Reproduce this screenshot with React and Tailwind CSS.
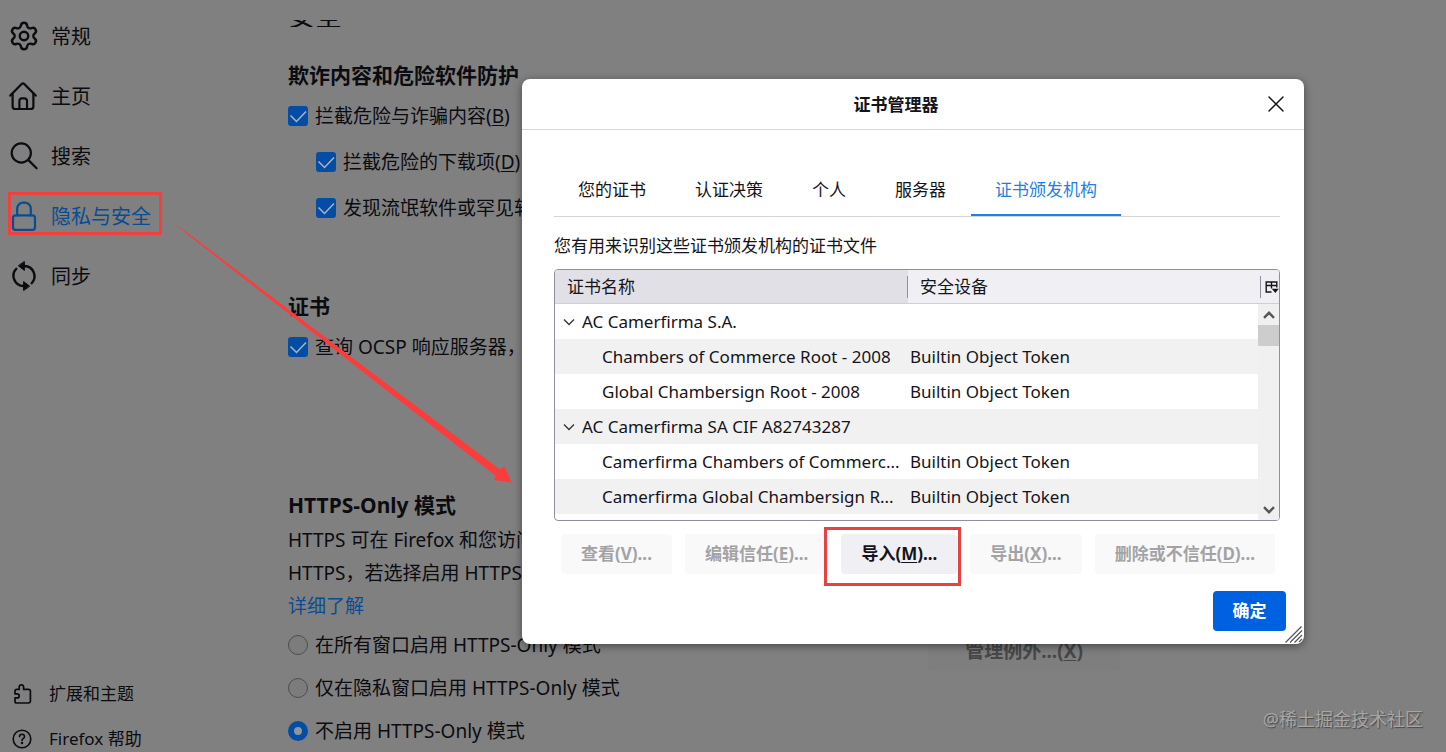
import React from "react";

const stroke = {
  fill: "none",
  stroke: "currentColor",
  strokeWidth: 2.2,
  strokeLinecap: "round",
  strokeLinejoin: "round",
};

function GearIcon() {
  return (
    <svg width="32" height="32" viewBox="0 0 24 24" {...stroke} strokeWidth="1.8" aria-hidden="true">
      <path d="M9.671 4.136a2.34 2.34 0 0 1 4.659 0 2.34 2.34 0 0 0 3.319 1.915 2.34 2.34 0 0 1 2.33 4.033 2.34 2.34 0 0 0 0 3.831 2.34 2.34 0 0 1-2.33 4.033 2.34 2.34 0 0 0-3.319 1.915 2.34 2.34 0 0 1-4.659 0 2.34 2.34 0 0 0-3.32-1.915 2.34 2.34 0 0 1-2.33-4.033 2.34 2.34 0 0 0 0-3.831A2.34 2.34 0 0 1 6.35 6.051a2.34 2.34 0 0 0 3.319-1.915" />
      <circle cx="12" cy="12" r="3.2" />
    </svg>
  );
}

function HomeIcon() {
  return (
    <svg width="30" height="30" viewBox="0 0 30 30" {...stroke} aria-hidden="true">
      <path d="M1.3 14.6 12.6 3.1a2 2 0 0 1 2.8 0l11.3 11.5" />
      <path d="M3.6 12.6v12.6a2.8 2.8 0 0 0 2.8 2.8h15.2a2.8 2.8 0 0 0 2.8-2.8V12.6" />
      <path d="M10.4 28v-8.2a2.4 2.4 0 0 1 2.4-2.4h2.8a2.4 2.4 0 0 1 2.4 2.4V28" />
    </svg>
  );
}

function SearchIcon() {
  return (
    <svg width="30" height="30" viewBox="0 0 30 30" {...stroke} aria-hidden="true">
      <circle cx="12.3" cy="12" r="9.6" />
      <path d="m19.2 18.9 8.4 8.4" />
    </svg>
  );
}

function LockIcon() {
  return (
    <svg width="30" height="30" viewBox="0 0 30 30" {...stroke} aria-hidden="true">
      <rect x="4" y="14.4" width="22" height="14.4" rx="2.6" />
      <path d="M8.2 14.4V7.6a6 6 0 0 1 6-6h1.6a6 6 0 0 1 6 6v6.8" />
    </svg>
  );
}

function SyncIcon() {
  return (
    <svg width="30" height="30" viewBox="0 0 30 30" {...stroke} strokeWidth="2.4" aria-hidden="true">
      <path d="M15.5 5a10.2 10.2 0 0 1 7.2 17.2" />
      <path d="M14.5 25A10.2 10.2 0 0 1 7.3 7.8" />
      <path d="M15.4.8v8.6L9.6 5z" fill="currentColor" strokeWidth="1" />
      <path d="M14.6 29.2v-8.6l5.8 4.4z" fill="currentColor" strokeWidth="1" />
    </svg>
  );
}

function PuzzleIcon() {
  return (
    <svg width="22" height="22" viewBox="0 0 22 22" {...stroke} strokeWidth="1.7" aria-hidden="true">
      <path d="M4 8.2a1.8 1.8 0 0 1 1.8-1.8h2.4V4.1a2.2 2.2 0 0 1 4.4 0v2.3h5a1.8 1.8 0 0 1 1.8 1.8v10a1.8 1.8 0 0 1-1.8 1.8H5.8A1.8 1.8 0 0 1 4 18.2v-3.3h2.2a2 2 0 0 0 0-4H4z" />
    </svg>
  );
}

function HelpIcon() {
  return (
    <svg width="22" height="22" viewBox="0 0 22 22" {...stroke} strokeWidth="1.6" aria-hidden="true">
      <circle cx="11" cy="11" r="8.8" />
      <path d="M8.5 8.7a2.5 2.5 0 0 1 5 0c0 1.6-2.5 1.8-2.5 3.7" />
      <circle cx="11" cy="15" r="0.5" fill="currentColor" />
    </svg>
  );
}

const NAV = [
  { label: "常规", Icon: GearIcon },
  { label: "主页", Icon: HomeIcon },
  { label: "搜索", Icon: SearchIcon },
  { label: "隐私与安全", Icon: LockIcon, active: true },
  { label: "同步", Icon: SyncIcon },
];

function Sidebar() {
  return (
    <aside className="flex w-[288px] shrink-0 flex-col pt-[6px]">
      <nav className="flex flex-col">
        {NAV.map(({ label, Icon, active }) => (
          <a
            key={label}
            href="#"
            className={
              active
                ? "relative flex h-[60px] items-center gap-[11px] pl-2 text-[20px] text-[#094c92]"
                : "relative flex h-[60px] items-center gap-[11px] pl-2 text-[20px]"
            }
          >
            <span className="flex w-8 justify-center">
              <Icon />
            </span>
            <span className="pt-[2px]">{label}</span>
            {active && (
              <span className="absolute top-[6px] left-2 h-[43px] w-[154px] border-[3px] border-[#f0413f]" />
            )}
          </a>
        ))}
      </nav>
      <div className="mt-auto flex flex-col gap-[19px] text-[17px]">
        <a href="#" className="flex h-[26px] items-center gap-4 pl-[11px]">
          <PuzzleIcon />
          扩展和主题
        </a>
        <a href="#" className="flex h-[26px] items-center gap-4 pl-[11px]">
          <HelpIcon />
          Firefox 帮助
        </a>
      </div>
    </aside>
  );
}

function Check({ children, className }) {
  return (
    <label className={`flex h-7 items-center gap-[7px] text-[19px] whitespace-nowrap ${className || ""}`}>
      <span className="relative size-5 shrink-0">
        <input type="checkbox" defaultChecked className="block size-5 appearance-none rounded-[3px] bg-[#044da4]" />
        <svg className="pointer-events-none absolute inset-0" width="20" height="20" viewBox="0 0 20 20" aria-hidden="true">
          <path d="m2.5 9.5 6 6 9.5-10" fill="none" stroke="#aab4c4" strokeWidth="1.5" />
        </svg>
      </span>
      <span>{children}</span>
    </label>
  );
}

function Radio({ children, checked }) {
  return (
    <label className="flex h-7 items-center gap-[7px] text-[19px] whitespace-nowrap">
      <input
        type="radio"
        name="https-only"
        defaultChecked={checked}
        className="size-5 shrink-0 appearance-none rounded-full border border-[#4d4d52] bg-[#7c7c7d] checked:border-[6px] checked:border-[#044da4] checked:bg-[#8f959c]"
      />
      <span>{children}</span>
    </label>
  );
}

function Settings() {
  return (
    <main className="flex w-[832px] shrink-0 flex-col">
      <div className="mt-5 flex h-[7px] items-end overflow-hidden">
        <h1 className="text-[27px] leading-[23px]">安全</h1>
      </div>

      <section className="mt-8 flex flex-col">
        <h2 className="text-[21px] leading-8 font-bold">欺诈内容和危险软件防护</h2>
        <div className="mt-[11px] flex flex-col gap-[18px]">
          <Check>拦截危险与诈骗内容(<u className="underline-offset-2">B</u>)</Check>
          <Check className="pl-7">拦截危险的下载项(<u className="underline-offset-2">D</u>)</Check>
          <Check className="pl-7">发现流氓软件或罕见软件</Check>
        </div>
      </section>

      <section className="mt-[68px] flex flex-col">
        <h2 className="text-[21px] leading-8 font-bold">证书</h2>
        <div className="mt-[11px]">
          <Check>查询 OCSP 响应服务器，</Check>
        </div>
      </section>

      <section className="mt-32 flex flex-col">
        <h2 className="text-[21px] leading-8 font-bold">HTTPS-Only 模式</h2>
        <p className="mt-[3px] text-[19px] leading-[33px]">
          HTTPS 可在 Firefox 和您访问
          <br />
          HTTPS，若选择启用 HTTPS
          <br />
          <a href="#" className="text-[#094c92]">详细了解</a>
        </p>
        <div className="mt-2 flex items-start justify-between">
          <div className="flex flex-col gap-[15px]">
            <Radio>在所有窗口启用 HTTPS-Only 模式</Radio>
            <Radio>仅在隐私窗口启用 HTTPS-Only 模式</Radio>
            <Radio checked>不启用 HTTPS-Only 模式</Radio>
          </div>
          <button type="button" disabled className="h-10 w-[192px] rounded bg-[#7e7e7e] text-[19px] font-bold text-[#474749]">
            管理例外...(<u className="underline-offset-2">X</u>)
          </button>
        </div>
      </section>
    </main>
  );
}

const TABS = ["您的证书", "认证决策", "个人", "服务器", "证书颁发机构"];

const ROWS = [
  { name: "AC Camerfirma S.A.", group: true },
  { name: "Chambers of Commerce Root - 2008", device: "Builtin Object Token" },
  { name: "Global Chambersign Root - 2008", device: "Builtin Object Token" },
  { name: "AC Camerfirma SA CIF A82743287", group: true },
  { name: "Camerfirma Chambers of Commerc...", device: "Builtin Object Token" },
  { name: "Camerfirma Global Chambersign R...", device: "Builtin Object Token" },
];

function Scrollbar() {
  return (
    <div className="flex h-[216px] flex-col bg-[#f0f0f0]">
      <button type="button" aria-label="向上滚动" className="flex h-[21px] items-center justify-center">
        <svg width="12" height="8" viewBox="0 0 12 8" fill="none" stroke="#555" strokeWidth="2.4">
          <path d="M1 6.8 6 1.8l5 5" />
        </svg>
      </button>
      <div className="h-[21px] bg-[#cdcdcd]" />
      <button type="button" aria-label="向下滚动" className="mt-auto flex h-[21px] items-center justify-center">
        <svg width="12" height="8" viewBox="0 0 12 8" fill="none" stroke="#555" strokeWidth="2.4">
          <path d="m1 1.2 5 5 5-5" />
        </svg>
      </button>
    </div>
  );
}

function CertTable() {
  return (
    <div className="overflow-hidden rounded border border-[#8f8f9d]">
      <table className="w-full table-fixed border-collapse text-left">
        <colgroup>
          <col className="w-[353px]" />
          <col />
          <col className="w-[21px]" />
        </colgroup>
        <thead>
          <tr className="h-[34px]">
            <th className="bg-[#e0e0e6] p-0 font-normal shadow-[inset_0_-1px_#cfcfd8]">
              <div className="ml-3 flex h-[22px] items-center border-r border-[#8f8f9d]">证书名称</div>
            </th>
            <th className="bg-[#f0f0f4] p-0 pl-3 font-normal shadow-[inset_0_-1px_#cfcfd8]">安全设备</th>
            <th className="bg-[#f0f0f4] p-0 pl-[2px] shadow-[inset_0_-1px_#cfcfd8]">
              <button type="button" aria-label="选择要显示的列" className="flex h-[22px] w-full items-center border-l border-[#8f8f9d] pl-1">
                <svg className="shrink-0" width="14" height="14" viewBox="0 0 14 14" fill="none" stroke="#15141a" strokeWidth="1.4">
                  <path d="M6.5 12H1.2V2h10.6v5.5M1.2 5.5h10.6M6.5 2v6.5" />
                  <path d="M6.8 8.8h7L10.3 13z" fill="#15141a" stroke="none" />
                </svg>
              </button>
            </th>
          </tr>
        </thead>
        <tbody>
          {ROWS.map((row, i) => (
            <tr key={row.name} className={i % 2 ? "h-[35px] bg-[#f1f1f1]" : "h-[35px] bg-white"}>
              <td className="overflow-hidden p-0 whitespace-nowrap">
                {row.group ? (
                  <span className="flex items-center gap-[7px] pl-2">
                    <svg width="12" height="8" viewBox="0 0 12 8" fill="none" stroke="#333" strokeWidth="1.3">
                      <path d="m1 1.5 5 5 5-5" />
                    </svg>
                    {row.name}
                  </span>
                ) : (
                  <span className="pl-[47px]">{row.name}</span>
                )}
              </td>
              <td className="p-0 pl-[2px]">{row.device}</td>
              {i === 0 && (
                <td rowSpan={7} className="p-0 align-top">
                  <Scrollbar />
                </td>
              )}
            </tr>
          ))}
          <tr className="h-[6px]">
            <td colSpan={2} className="p-0" />
          </tr>
        </tbody>
      </table>
    </div>
  );
}

function ActionButton({ label, accessKey, disabled }) {
  return (
    <button
      type="button"
      disabled={disabled}
      className="h-10 rounded bg-[#f0f0f4] px-5 font-bold whitespace-nowrap text-[#15141a] disabled:bg-[#f9f9fa] disabled:text-[#a3a3a5]"
    >
      {label}(<u className="underline-offset-2">{accessKey}</u>)...
    </button>
  );
}

function Dialog() {
  return (
    <div
      role="dialog"
      aria-labelledby="cert-title"
      className="relative flex flex-1 flex-col rounded-lg bg-white text-[17px] text-[#15141a] shadow-[0_2px_8px_rgba(0,0,0,0.45)]"
    >
      <header className="flex h-[51px] items-center border-b border-[#d8d8dc]">
        <h2 id="cert-title" className="flex-1 pt-[2px] pl-[22px] text-center font-bold">证书管理器</h2>
        <button type="button" aria-label="关闭" className="flex w-14 justify-center">
          <svg width="16" height="16" viewBox="0 0 16 16" fill="none" stroke="#15141a" strokeWidth="1.5" strokeLinecap="round">
            <path d="m1 1 14 14M15 1 1 15" />
          </svg>
        </button>
      </header>

      <div className="flex flex-col px-6 pl-8">
        <div role="tablist" className="mt-[34px] flex gap-px border-b border-[#d4d4d8]">
          {TABS.map((tab, i) => (
            <button
              key={tab}
              type="button"
              role="tab"
              aria-selected={i === 4}
              className={
                i === 4
                  ? "h-[52px] border-b-2 border-[#1f80e4] px-6 pt-[2px] text-[#1f80e4]"
                  : "h-[52px] border-b-2 border-transparent px-6 pt-[2px]"
              }
            >
              {tab}
            </button>
          ))}
        </div>
        <p className="mt-[17px] mb-[11px] leading-6">您有用来识别这些证书颁发机构的证书文件</p>
        <CertTable />
        <div className="mt-[13px] flex justify-between pr-[5px] pl-[7px]">
          <ActionButton label="查看" accessKey="V" disabled />
          <ActionButton label="编辑信任" accessKey="E" disabled />
          <div className="relative">
            <ActionButton label="导入" accessKey="M" />
            <span className="pointer-events-none absolute -top-[7px] -right-1 -bottom-3 -left-[17px] border-[3px] border-[#e84141]" />
          </div>
          <ActionButton label="导出" accessKey="X" disabled />
          <ActionButton label="删除或不信任" accessKey="D" disabled />
        </div>
      </div>

      <footer className="mt-[17px] mb-[13px] flex justify-end pr-[18px]">
        <button type="button" className="h-10 w-[73px] rounded bg-[#0061e0] font-bold text-white">确定</button>
      </footer>
      <svg className="absolute right-0 bottom-0" width="20" height="20" viewBox="0 0 20 20" stroke="#55555c" strokeWidth="1.2" aria-hidden="true">
        <path d="M1.5 18.5 17.5 2.5M6 18.5 18 6.5M10.5 18.5 18 11M15 18l3-3" />
      </svg>
    </div>
  );
}

export default function App() {
  return (
    <div className="relative flex h-screen overflow-hidden bg-[#808080] font-['Noto_Sans','Noto_Sans_CJK_SC',sans-serif] text-[#0b0b10]">
      <Sidebar />
      <Settings />
      <div className="absolute inset-0 flex items-start pt-[79px] pr-[142px] pl-[522px]">
        <Dialog />
      </div>
      <svg className="pointer-events-none absolute top-0 left-0" width="520" height="490" viewBox="0 0 520 490" aria-hidden="true">
        <path d="M171.5 221.5 190 234.8 499.5 469.3 504.5 466.5 511.8 482.5 494 480 496 476 189.5 236z" fill="#fb3c3c" />
      </svg>
      <div className="pointer-events-none absolute right-[23px] bottom-[19px] text-[18px] leading-7 text-[#a6a6a6] [text-shadow:1px_1px_1px_#484848]">
        @稀土掘金技术社区
      </div>
    </div>
  );
}
